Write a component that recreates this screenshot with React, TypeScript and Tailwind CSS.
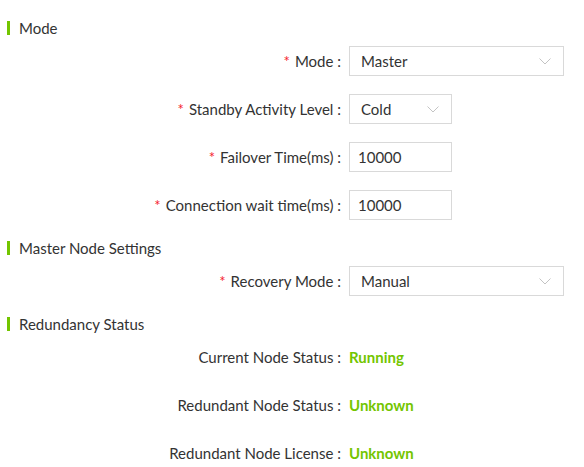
const font = { fontFamily: '"Source Sans Pro", Lato, "Noto Sans", sans-serif' };

const Chevron = () => (
  <svg width="12" height="7" viewBox="0 0 12 7" fill="none" className="shrink-0">
    <polyline points="0.5,0.5 6,6 11.5,0.5" stroke="#c4c4c4" strokeWidth="1" />
  </svg>
);

const SectionTitle = ({ title }: { title: string }) => (
  <div className="flex items-center h-5 mb-2">
    <div className="w-[3px] h-[14px] bg-[#73c500] ml-[7px] mr-[9px]" />
    <span className="text-[15px] text-[#333]">{title}</span>
  </div>
);

const Label = ({ text, required }: { text: string; required?: boolean }) => (
  <div className="w-[341px] mr-2 text-right text-[15px] text-[#333] shrink-0 whitespace-nowrap">
    {required && <span className="text-[#f5222d] mr-[5px]">*</span>}
    {text} :
  </div>
);

const Select = ({ value, wide }: { value: string; wide?: boolean }) => (
  <div
    className={`${wide ? 'w-[215px]' : 'w-[103px]'} h-[30px] border border-[#d9d9d9] flex items-center justify-between pl-[11px] pr-[12px] text-[15px] text-[#333] bg-white`}
  >
    <span>{value}</span>
    <Chevron />
  </div>
);

const Input = ({ value }: { value: string }) => (
  <div className="w-[103px] h-[30px] border border-[#d9d9d9] flex items-center pl-[8px] text-[15px] text-[#333] bg-white">
    {value}
  </div>
);

const Row = ({ children }: { children: React.ReactNode }) => (
  <div className="flex items-center h-[30px] mb-[18px]">{children}</div>
);

export default function App() {
  return (
    <div className="w-[584px] h-[467px] bg-white pt-[18px] overflow-hidden" style={font}>
      <SectionTitle title="Mode" />
      <Row>
        <Label text="Mode" required />
        <Select value="Master" wide />
      </Row>
      <Row>
        <Label text="Standby Activity Level" required />
        <Select value="Cold" />
      </Row>
      <Row>
        <Label text="Failover Time(ms)" required />
        <Input value="10000" />
      </Row>
      <Row>
        <Label text="Connection wait time(ms)" required />
        <Input value="10000" />
      </Row>

      <SectionTitle title="Master Node Settings" />
      <Row>
        <Label text="Recovery Mode" required />
        <Select value="Manual" wide />
      </Row>

      <SectionTitle title="Redundancy Status" />
      {[
        ['Current Node Status', 'Running'],
        ['Redundant Node Status', 'Unknown'],
        ['Redundant Node License', 'Unknown'],
      ].map(([k, v]) => (
        <Row key={k}>
          <Label text={k} />
          <span className="text-[15px] font-bold text-[#73c500]">{v}</span>
        </Row>
      ))}
    </div>
  );
}
